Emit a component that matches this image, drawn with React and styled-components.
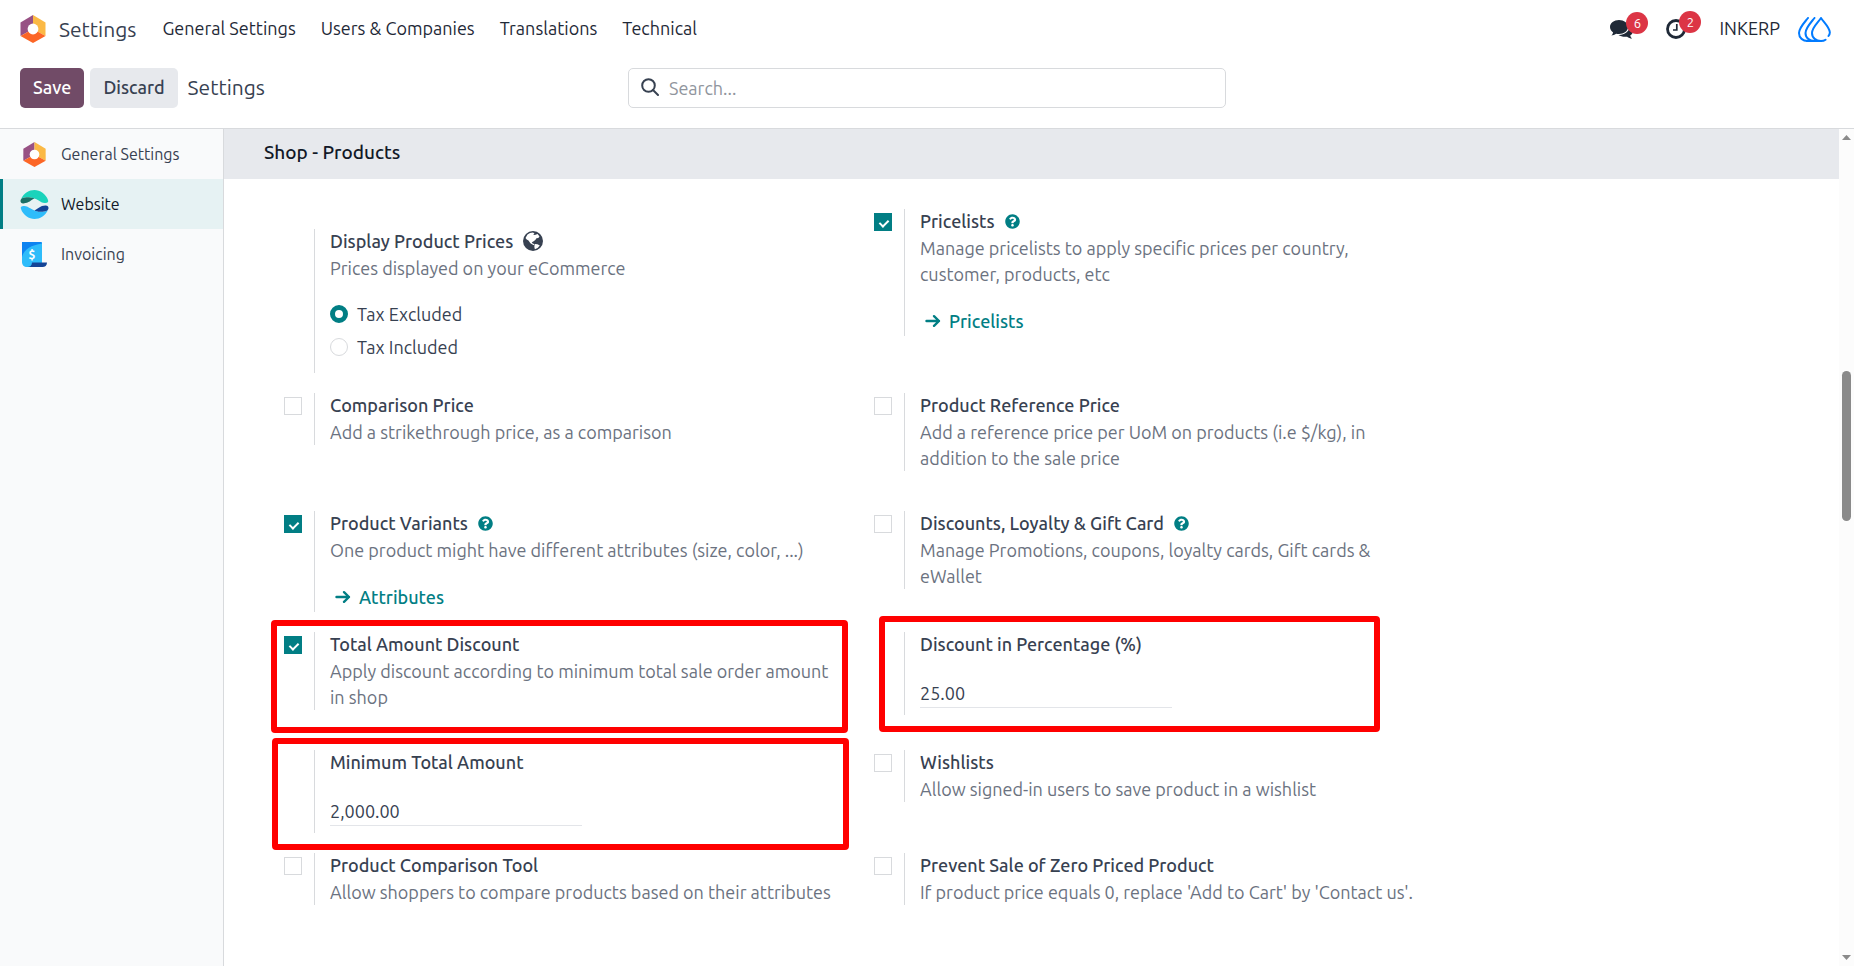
import React, { useState } from 'react'
import styled, { createGlobalStyle } from 'styled-components';
import { FaQuestionCircle } from 'react-icons/fa';


const settings = [
    {
        id: 'prices', title: 'Display Product Prices', text: 'Prices displayed on your eCommerce',
        globe: true, plain: true, lowered: true,
        radios: ['Tax Excluded', 'Tax Included'],
    },
    {
        id: 'pricelists', title: 'Pricelists', help: true, checked: true, link: 'Pricelists',
        text: 'Manage pricelists to apply specific prices per country, customer, products, etc',
    },
    { id: 'comparison-price', title: 'Comparison Price', text: 'Add a strikethrough price, as a comparison' },
    {
        id: 'reference-price', title: 'Product Reference Price',
        text: 'Add a reference price per UoM on products (i.e $/kg), in addition to the sale price',
    },
    {
        id: 'variants', title: 'Product Variants', help: true, checked: true, link: 'Attributes',
        text: 'One product might have different attributes (size, color, ...)',
    },
    {
        id: 'loyalty', title: 'Discounts, Loyalty & Gift Card', help: true,
        text: 'Manage Promotions, coupons, loyalty cards, Gift cards & eWallet',
    },
    {
        id: 'total-discount', title: 'Total Amount Discount', checked: true, mark: '-12px 7px -23px 6px',
        text: 'Apply discount according to minimum total sale order amount in shop',
    },
    { id: 'percentage', title: 'Discount in Percentage (%)', plain: true, value: '25.00', mark: '-16px 65px -17px 24px' },
    { id: 'minimum', title: 'Minimum Total Amount', plain: true, value: '2,000.00', mark: '-12px 6px -17px 7px' },
    { id: 'wishlists', title: 'Wishlists', text: 'Allow signed-in users to save product in a wishlist' },
    { id: 'comparison-tool', title: 'Product Comparison Tool', text: 'Allow shoppers to compare products based on their attributes' },
    {
        id: 'zero-priced', title: 'Prevent Sale of Zero Priced Product',
        text: "If product price equals 0, replace 'Add to Cart' by 'Contact us'.",
    },
];

const SettingsLogo = ({ size }) => (
    <svg width={size} height={size} viewBox="0 0 28 28" aria-hidden="true">
        <path d="M14 0v14L1.5 21V7.6z" fill="#985184" />
        <path d="M14 0l12.5 7.6V21L14 14z" fill="#fbb945" />
        <path d="M14 14l12.5 7L14 28 1.5 21z" fill="#fc6626" />
        <circle cx="14" cy="14" r="5.4" fill="#fff" />
    </svg>
)

const WebsiteLogo = () => (
    <svg width="29" height="29" viewBox="0 0 29 29" aria-hidden="true">
        <path d="M1 9C4 3 9 0 14.500 0S26 4 28 10c.8 2-.5 3-2.500 3C20 13.500 18 8 9 7.300 5 7 2 8 1 9z" fill="#1ad3bb" />
        <path d="M.5 11c0-3 3.500-3.800 8.500-3.700 2 .1 4 .7 5.500 1.300C11 10 9 13.300 3.500 13.400 1.500 13.500.5 12.500.5 11z" fill="#1a6f66" />
        <path d="M28 20c-3 6-8 9-13.500 9S3 25 1 19c-.8-2 .5-3 2.500-3 5.500-.5 7.500 5 16.500 5.700 4 .3 7-.7 8-1.700z" fill="#2ebcfa" />
        <path d="M28.500 18c0 3-3.500 3.800-8.500 3.700-2-.1-4-.7-5.500-1.300 3.500-1.400 5.500-4.700 11-4.800 2-.1 3 .9 3 2.400z" fill="#144496" />
    </svg>
)

const InvoicingLogo = () => (
    <svg width="25" height="25" viewBox="0 0 25 25" aria-hidden="true">
        <path d="M0 0h18.500c1 0 1.500.6 1.500 1.500V25H5c-3 0-5-2-5-5z" fill="#2ebcfa" />
        <path d="M0 0h18.500c1 0 1.500.6 1.500 1.500C9 3 1.500 8 0 15z" fill="#0d83f0" />
        <path d="M10 20.500h15C25 23.500 23 25 20.500 25H5c3 0 5-1.500 5-4.500z" fill="#144496" />
        <text x="10" y="16.500" fontSize="12" fontWeight="700" fill="#fff" textAnchor="middle">$</text>
    </svg>
)

const CompanyLogo = () => (
    <svg width="33" height="25" viewBox="0 0 33 25" fill="none" stroke="#017bff" strokeWidth="2" strokeLinecap="round" strokeLinejoin="round" aria-hidden="true">
        <path d="M10 1C6 6 1 11 1 16c0 5 4 8 8.500 8" />
        <path d="M16.500 1c-4 5-9 10-9 15 0 5 4 8 9 8" />
        <path d="M30.500 19c.9-1.200 1.500-2.400 1.300-4C31.200 10 26 5.500 23 1c-3.500 5-9 9.500-9 15 0 5 4 8 9 8 1.800 0 3.300-.4 4.500-1.300" />
        <path d="M9 24h14" />
    </svg>
)

const ChatIcon = () => (
    <svg width="23" height="19" viewBox="0 0 23 19" fill="currentColor" aria-hidden="true">
        <path d="M9 0c5 0 9 3 9 7s-4 7-9 7c-1 0-2-.1-2.900-.3C4.500 14.800 3 15.300 1.300 15.500c.9-.9 1.600-1.900 1.800-3.100C1.200 11.100 0 9.100 0 7c0-4 4-7 9-7z" />
        <path d="M19.500 6.500c2 1.200 3.300 2.900 3.300 4.900 0 1.600-1 3-2.600 4 .3 1.200.9 2.200 1.900 3.100-1.900-.1-3.500-.7-5-1.800-3.200.5-6.400-.2-8.600-1.700 6 .2 10.900-3.500 11-8.500z" />
    </svg>
)

const ClockIcon = () => (
    <svg width="20" height="20" viewBox="0 0 20 20" fill="none" stroke="currentColor" aria-hidden="true">
        <circle cx="10" cy="10" r="8.500" strokeWidth="2.800" />
        <path d="M10.800 5v6H7" strokeWidth="1.700" />
    </svg>
)

const SearchIcon = () => (
    <svg width="18" height="20" viewBox="0 0 18 20" fill="none" stroke="currentColor" strokeWidth="2" strokeLinecap="round" aria-hidden="true">
        <circle cx="7.500" cy="7.500" r="6.300" />
        <path d="M12 12l5 5" />
    </svg>
)

const ArrowIcon = () => (
    <svg width="16" height="14" viewBox="0 0 16 14" fill="none" stroke="currentColor" strokeWidth="2.400" strokeLinecap="round" strokeLinejoin="round" aria-hidden="true">
        <path d="M1.500 7h12.500M9 2.200L14 7 9 11.800" />
    </svg>
)

const GlobeIcon = () => (
    <svg width="20" height="20" viewBox="0 0 20 20" aria-hidden="true">
        <circle cx="10" cy="10" r="10" fill="#374151" />
        <path d="M4.500 3.500L7 2l3-.6 1.500 1-1.300 1 1.600.6 2.800-.9 1.900 2.400-1.200 1.500-1.800.2-1.200 1.800-2 1.600-1.500.6.9 1.400 1.500.3.6 1.600-1.900-.8-2.500-1.500L5.500 9.500 3.700 8.600 2.500 7z" fill="#fff" />
        <path d="M12 13l2.500.2 2.300 1.300-2.200 2.500-2.700 1.300-.6-2.500z" fill="#fff" />
    </svg>
)

const Setting = ({ item }) => {
    const [checked, setChecked] = useState(Boolean(item.checked));
    const [choice, setChoice] = useState(0);
    const { id, title, text, help, globe, plain, lowered, radios, link, value, mark } = item;
    return (
        <SettingBox $roomy={!radios && !link && !value} $lowered={lowered}>
            <SettingFrame>
                <LeftPane>
                    {plain ? null : <Checkbox id={id} type="checkbox" checked={checked} onChange={(e) => setChecked(e.target.checked)} />}
                </LeftPane>
                <RightPane>
                    <TitleRow>
                        {radios ? <Title as="span" id={id}>{title}</Title> : <Title htmlFor={id}>{title}</Title>}
                        {globe ? <GlobeIcon /> : null}
                        {help ? <HelpLink href="#help" aria-label={`${title} documentation`}><FaQuestionCircle size={15} /></HelpLink> : null}
                    </TitleRow>
                    {text ? <Description>{text}</Description> : null}
                    {radios ? (
                        <RadioGroup role="radiogroup" aria-labelledby={id}>
                            {radios.map((label, i) => (
                                <RadioLabel key={label}>
                                    <Radio type="radio" name={id} checked={choice === i} onChange={() => setChoice(i)} />
                                    {label}
                                </RadioLabel>
                            ))}
                        </RadioGroup>
                    ) : null}
                    {link ? <ActionLink href={`#${id}`}><ArrowIcon />{link}</ActionLink> : null}
                    {value ? <ValueInput id={id} type="text" defaultValue={value} /> : null}
                </RightPane>
                {mark ? <Highlight $inset={mark} /> : null}
            </SettingFrame>
        </SettingBox>
    )
}

const App = () => {
    return (
        <Page>
            <GlobalStyle />
            <Navbar>
                <SettingsLogo size={28} />
                <AppName href="#home">Settings</AppName>
                <Menu>
                    <MenuLink href="#general">General Settings</MenuLink>
                    <MenuLink href="#users">Users &amp; Companies</MenuLink>
                    <MenuLink href="#translations">Translations</MenuLink>
                    <MenuLink href="#technical">Technical</MenuLink>
                </Menu>
                <Systray>
                    <TrayButton aria-label="Messages"><ChatIcon /><Badge>6</Badge></TrayButton>
                    <TrayButton aria-label="Activities"><ClockIcon /><Badge>2</Badge></TrayButton>
                    <MenuLink href="#company">INKERP</MenuLink>
                    <CompanyLogo />
                </Systray>
            </Navbar>

            <ControlPanel>
                <Actions>
                    <Button $primary>Save</Button>
                    <Button>Discard</Button>
                    <Breadcrumb>Settings</Breadcrumb>
                </Actions>
                <SearchBox>
                    <SearchIcon />
                    <SearchInput type="text" placeholder="Search..." aria-label="Search" />
                </SearchBox>
            </ControlPanel>

            <Body>
                <Sidebar>
                    <Tab href="#general-tab"><TabIcon><SettingsLogo size={25} /></TabIcon>General Settings</Tab>
                    <Tab href="#website-tab" $active><TabIcon><WebsiteLogo /></TabIcon>Website</Tab>
                    <Tab href="#invoicing-tab"><TabIcon><InvoicingLogo /></TabIcon>Invoicing</Tab>
                </Sidebar>
                <Content>
                    <SectionTitle>Shop - Products</SectionTitle>
                    <SettingsGrid>
                        {settings.map((item) => <Setting key={item.id} item={item} />)}
                    </SettingsGrid>
                </Content>
                <Scrollbar>
                    <svg width="9" height="5" viewBox="0 0 9 5" aria-hidden="true"><path d="M0 5l4.500-5L9 5z" fill="#8a8a8a" /></svg>
                    <Track><Thumb /></Track>
                    <svg width="9" height="5" viewBox="0 0 9 5" aria-hidden="true"><path d="M0 0l4.500 5L9 0z" fill="#8a8a8a" /></svg>
                </Scrollbar>
            </Body>
        </Page>
    )
}

const GlobalStyle = createGlobalStyle`
*{
    box-sizing: border-box;
}
body{
    margin: 0;
    background: #fff;
    color: #374151;
    font: 400 18px/26px Ubuntu, "Noto Sans", "Open Sans", sans-serif;
}
a{
    text-decoration: none;
}
button, input{
    font: inherit;
}
svg{
    flex-shrink: 0;
}
`

const Page = styled.div`
display: flex;
flex-direction: column;
min-height: 100vh;
`

const Navbar = styled.header`
display: flex;
align-items: center;
height: 58px;
padding: 0 23px 0 19px;
`

const AppName = styled.a`
margin: 0 26px 0 12px;
font-size: 21px;
color: #374151;
`

const Menu = styled.nav`
display: flex;
flex: 1;
gap: 25px;
`

const MenuLink = styled.a`
padding-bottom: 2px;
color: #1f2937;
white-space: nowrap;
`

const Systray = styled.div`
display: flex;
align-items: center;
gap: 18px;
`

const TrayButton = styled.button`
display: flex;
position: relative;
padding: 0 15px 0 0;
border: none;
background: none;
color: #1f2937;
`

const Badge = styled.span`
position: absolute;
top: -8px;
right: 0;
width: 22px;
height: 22px;
border-radius: 50%;
background: #dc3545;
color: #fff;
font-size: 13px;
line-height: 22px;
text-align: center;
`

const ControlPanel = styled.div`
display: grid;
grid-template-columns: 1fr minmax(0, 598px) 1fr;
padding: 10px 20px 20px;
border-bottom: 1px solid #d8dadd;
`

const Actions = styled.div`
display: flex;
align-items: center;
gap: 6px;
`

const Button = styled.button`
height: 40px;
padding: 0 13px 2px;
border: none;
border-radius: 5px;
font-weight: 500;
color: ${(props) => (props.$primary ? '#fff' : '#374151')};
background: ${(props) => (props.$primary ? '#714b67' : '#e7e9ed')};
`

const Breadcrumb = styled.h1`
margin: 0 0 0 4px;
padding-bottom: 2px;
font-size: 21px;
font-weight: 400;
`

const SearchBox = styled.div`
display: flex;
align-items: center;
gap: 10px;
height: 40px;
padding: 0 12px;
border: 1px solid #d8dadd;
border-radius: 5px;
`

const SearchInput = styled.input`
flex: 1;
min-width: 0;
padding: 0;
border: none;
outline: none;
color: #374151;
&::placeholder{
    color: #90959d;
}
`

const Body = styled.div`
display: flex;
flex: 1;
`

const Sidebar = styled.nav`
flex: 0 0 224px;
border-right: 1px solid #d8dadd;
background: #f9fafb;
`

const Tab = styled.a`
display: flex;
align-items: center;
gap: 10px;
height: 50px;
padding-left: 14px;
font-size: 16px;
border-left: 3px solid ${(props) => (props.$active ? '#017e84' : 'transparent')};
background: ${(props) => (props.$active ? '#e6f2f3' : 'transparent')};
color: ${(props) => (props.$active ? '#111827' : '#374151')};
`

const TabIcon = styled.span`
display: flex;
justify-content: center;
width: 34px;
`

const Content = styled.main`
flex: 1;
min-width: 0;
padding-bottom: 20px;
`

const SectionTitle = styled.h2`
margin: 0;
padding: 10px 40px 14px;
background: #e7e9ed;
color: #111827;
font-size: 19px;
font-weight: 500;
`

const SettingsGrid = styled.div`
display: grid;
grid-template-columns: repeat(2, minmax(0, 590px));
padding: 30px 0 0 41px;
`

const SettingBox = styled.section`
padding-top: ${(props) => (props.$lowered ? '20px' : '0')};
padding-bottom: ${(props) => (props.$roomy ? '40px' : '20px')};
`

const SettingFrame = styled.div`
display: flex;
position: relative;
`

const LeftPane = styled.div`
display: flex;
flex: 0 0 49px;
padding: 4px 0 0 19px;
`

const RightPane = styled.div`
flex: 1;
min-width: 0;
padding: 0 16px 0 15px;
border-left: 1px solid #d8dadd;
`

const Checkbox = styled.input`
appearance: none;
position: relative;
width: 18px;
height: 18px;
margin: 0;
border: 1px solid #d8dadd;
background: #fff;
&:checked{
    border-color: #017e84;
    background: #017e84;
}
&:checked::after{
    content: '';
    position: absolute;
    top: 4px;
    left: 6px;
    width: 4px;
    height: 7px;
    border: solid #fff;
    border-width: 0 2px 2px 0;
    transform: rotate(45deg);
}
`

const TitleRow = styled.div`
display: flex;
align-items: center;
gap: 10px;
padding-bottom: 2px;
line-height: 24px;
`

const Title = styled.label`
font-weight: 500;
`

const HelpLink = styled.a`
display: flex;
color: #017e84;
`

const Description = styled.div`
color: #6b7280;
`

const RadioGroup = styled.div`
display: flex;
flex-direction: column;
gap: 7px;
padding: 20px 0 13px;
`

const RadioLabel = styled.label`
display: flex;
align-items: center;
gap: 9px;
`

const Radio = styled.input`
appearance: none;
width: 18px;
height: 18px;
margin: 0;
border: 1px solid #d8dadd;
border-radius: 50%;
background: #fff;
&:checked{
    border: 5px solid #017e84;
}
`

const ActionLink = styled.a`
display: flex;
align-items: center;
gap: 8px;
padding: 21px 0 2px 5px;
color: #017e84;
font-weight: 500;
`

const ValueInput = styled.input`
display: block;
width: 252px;
max-width: 100%;
height: 28px;
margin: 22px 0 7px;
padding: 0 0 2px;
border: none;
border-bottom: 1px solid #e3e5e9;
outline: none;
color: #374151;
`

/* red frame drawn over the settings that the module adds */
const Highlight = styled.div`
position: absolute;
inset: ${(props) => props.$inset};
border: 6px solid #f00;
border-radius: 4px;
pointer-events: none;
`

const Scrollbar = styled.div`
display: flex;
flex: 0 0 15px;
flex-direction: column;
align-items: center;
padding: 6px 0;
background: #fcfcfc;
`

const Track = styled.div`
display: flex;
flex: 1;
flex-direction: column;
padding: 3px 0;
&::before{
    content: '';
    flex: 228;
}
&::after{
    content: '';
    flex: 430;
}
`

const Thumb = styled.div`
flex: 150;
width: 9px;
border-radius: 5px;
background: #8a8a8a;
`

export default App;
